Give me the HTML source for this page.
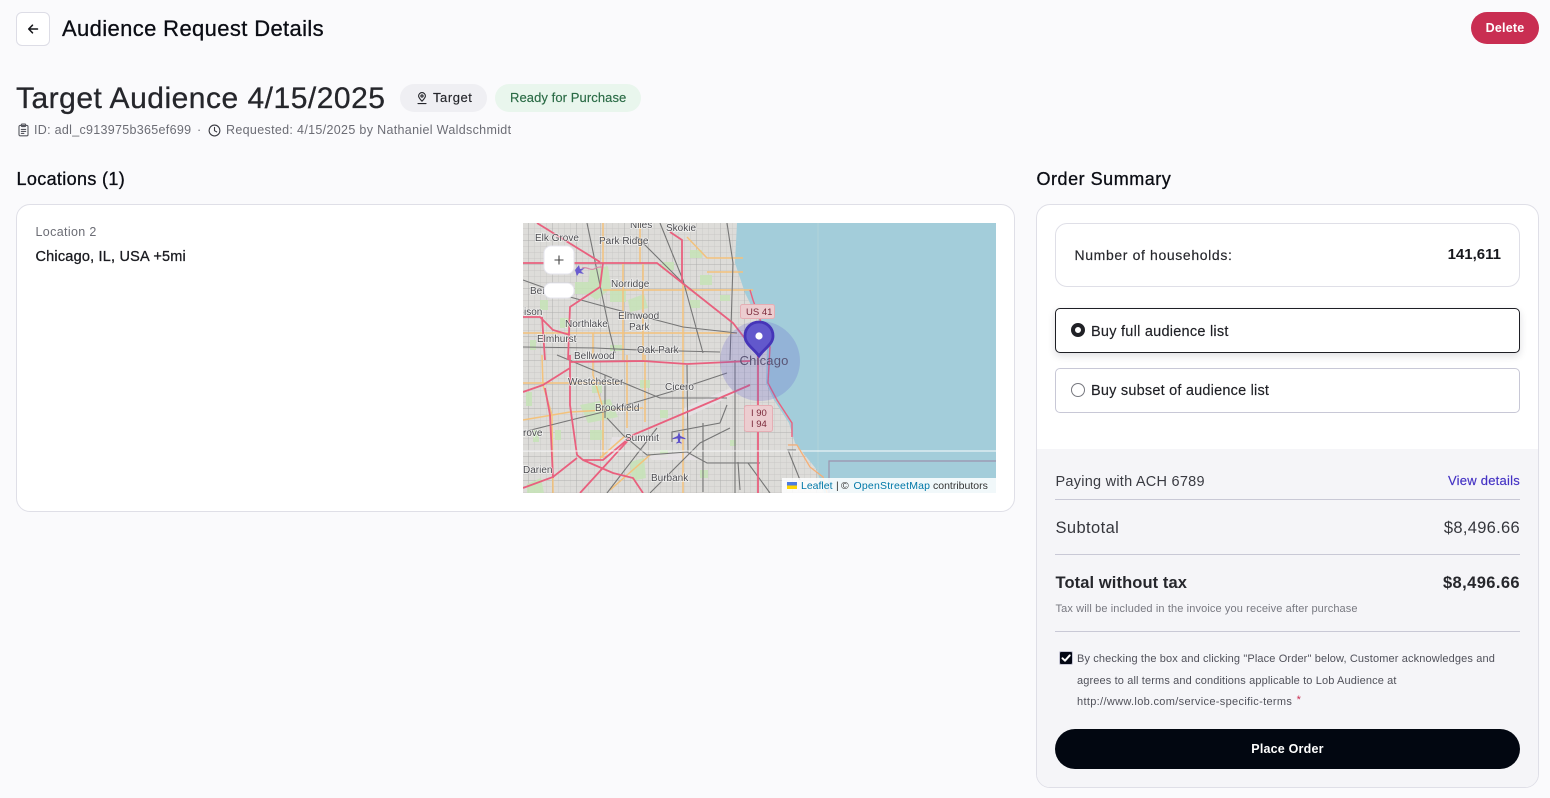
<!DOCTYPE html>
<html lang="en"><head><meta charset="utf-8"><title>Audience Request Details</title>
<style>
*{box-sizing:border-box}
html,body{margin:0;padding:0}
body{width:1550px;height:798px;overflow:hidden;background:#fafafc;position:relative;font-family:"Liberation Sans",sans-serif;color:#202126}
.t{position:absolute;white-space:nowrap;line-height:20px;height:20px}
.m{-webkit-text-stroke:.3px currentColor}
.s{-webkit-text-stroke:.15px currentColor}
.b{position:absolute}
.r{text-align:right}
.ic{position:absolute;fill:none;stroke-linecap:round;stroke-linejoin:round}
</style></head><body>

<div class="b" style="left:16px;top:12px;width:34px;height:34px;background:#fff;border:1px solid #dddde6;border-radius:6px"></div>
<svg class="ic" style="left:27px;top:23px" width="12" height="12" viewBox="0 0 12 12" stroke="#15161a" stroke-width="1.5"><path d="M10.5 6H1.8M5.5 2.2 1.7 6l3.8 3.8"/></svg>
<div class="t m" style="left:62px;top:19px;font-size:22px;letter-spacing:.37px;color:#0b0d14">Audience Request Details</div>
<div class="b" style="left:1471px;top:12px;width:68px;height:32px;background:#c92e52;border-radius:16px"></div>
<div class="t" style="left:1471px;top:18px;width:68px;text-align:center;font-size:12.5px;font-weight:700;letter-spacing:.2px;color:#fff">Delete</div>

<div class="t m" style="left:16px;top:89px;font-size:30px;letter-spacing:.5px;color:#25262b">Target Audience 4/15/2025</div>
<div class="b" style="left:400px;top:84px;width:87px;height:28px;background:#efeff3;border-radius:14px"></div>
<svg class="ic" style="left:415px;top:91px" width="14" height="14" viewBox="0 0 14 14" stroke="#25262b" stroke-width="1.1"><path d="M7 10.2C5 8 3.6 6.7 3.6 5A3.4 3.4 0 0 1 10.4 5C10.4 6.7 9 8 7 10.2Z"/><circle cx="7" cy="5" r="1.1"/><path d="M3 12.6h8"/></svg>
<div class="t s" style="left:433px;top:88px;font-size:13px;letter-spacing:.55px;color:#25262b">Target</div>
<div class="b" style="left:495px;top:84px;width:146px;height:28px;background:#e9f6ed;border-radius:14px"></div>
<div class="t s" style="left:510px;top:88px;font-size:13px;letter-spacing:.08px;color:#2a6b45">Ready for Purchase</div>

<svg class="ic" style="left:17px;top:123px" width="13" height="14" viewBox="0 0 13 14" stroke="#55565e" stroke-width="1.1"><rect x="2" y="2.4" width="9" height="10.4" rx="1.2"/><rect x="4.4" y="1" width="4.2" height="2.6" rx=".6"/><path d="M4.3 6.4h4.4M4.3 8.4h4.4M4.3 10.4h2.6"/></svg>
<div class="t" style="left:34px;top:120px;font-size:12.5px;letter-spacing:.3px;color:#6c6d75">ID: adl_c913975b365ef699</div>
<div class="t" style="left:197px;top:120px;font-size:12.5px;color:#6c6d75">·</div>
<svg class="ic" style="left:208px;top:124px" width="13" height="13" viewBox="0 0 13 13" stroke="#3a3b42" stroke-width="1.1"><circle cx="6.5" cy="6.5" r="5.4"/><path d="M6.5 3.4v3.3l2.2 1.2"/></svg>
<div class="t" style="left:226px;top:120px;font-size:12.5px;letter-spacing:.33px;color:#6c6d75">Requested: 4/15/2025 by Nathaniel Waldschmidt</div>

<div class="t m" style="left:16.5px;top:169px;font-size:18px;letter-spacing:.35px;color:#0b0d14">Locations (1)</div>
<div class="t m" style="left:1036.5px;top:169px;font-size:18px;letter-spacing:.52px;color:#0b0d14">Order Summary</div>

<div class="b" style="left:16px;top:204px;width:999px;height:308px;background:#fff;border:1px solid #dfdfe7;border-radius:14px"></div>
<div class="t" style="left:35.5px;top:222px;font-size:12.5px;letter-spacing:.35px;color:#6c6d75">Location 2</div>
<div class="t m" style="left:35.5px;top:247px;font-size:14.5px;letter-spacing:.2px;color:#1a1b20">Chicago, IL, USA +5mi</div>

<svg class="b" style="left:523px;top:223px" width="473" height="270" viewBox="523 223 473 270">
<defs>
<pattern id="g" width="6" height="6" patternUnits="userSpaceOnUse"><path d="M0 0H6M0 0V6" stroke="#c4c4c2" stroke-width=".7" fill="none"/></pattern>
<pattern id="h" width="24" height="24" patternUnits="userSpaceOnUse"><path d="M0 0H24M0 0V24" stroke="#a9a9a8" stroke-width=".8" fill="none"/></pattern>
<filter id="bl" x="0" y="0" width="100%" height="100%"><feGaussianBlur stdDeviation=".35"/></filter>
</defs>
<g filter="url(#bl)">
<rect x="523" y="223" width="473" height="270" fill="#dddcd9"/>
<rect x="523" y="223" width="320" height="270" fill="url(#g)"/>
<rect x="523" y="223" width="320" height="270" fill="url(#h)"/>
<g fill="#c5e3b6" opacity=".85">
<path d="M590 270l18-4 3 22-14 12-10-6zM610 290h16v12h-16zM628 300l16-6 4 14-18 4zM575 282h14v12h-14zM662 262h12v8h-12zM690 250h12v8h-12zM700 275h12v10h-12zM540 300h8v10h-8zM560 318h9v10h-9zM530 340h6v10h-6zM580 405l30-6 8 18-30 6zM590 430h14v10h-14zM526 392h6v14h-6zM533 430h6v12h-6zM555 430h6v10h-6zM630 462l14-4 2 20-14 3zM527 484l14-6 3 15h-17zM660 450h8v8h-8zM700 470h8v8h-8zM730 440h6v6h-6zM690 300h10v8h-10zM640 380h10v8h-10zM660 410h8v8h-8zM610 345h12v6h-12zM592 385h10v8h-10zM720 295h10v6h-10z"/>
</g>
<path d="M612 437h16l-12 20-10 4zM648 455l40-3 10 8h-46zM680 410l50-22 5 6-50 24z" fill="#e6e2e5" opacity=".85"/>
<path d="M737 223l-2 40 10 30 14 28 8 26-1 36 8 17 15 23 6 20 22 27 7 23H996V223Z" fill="#a3cdda"/>
<path d="M818 223V493" stroke="#b7d6d8" stroke-width=".7" fill="none"/>
<g fill="none" stroke="#f3c27c" stroke-width="1.5">
<path d="M623 263V360M643 263V360M683 283V493M603 290H753M687 237l20 21h36M707 272h36M523 333H737M593 333v42l10 33v50M542 355l1 30 9 30 1 78M627 355V428M645 355V422M523 420l47-8 73-4M523 383h97M603 263v-40M640 263v-40M600 458l25-22M610 490l40-35"/>
</g>
<g fill="none" stroke="#767676" stroke-width="1.1">
<path d="M587 223l23 110 5 20M660 223l23 57 20 73M727 223l6 40-3 97M637 237l46 46 50 40M523 280l47 17 40 11 73 19 54 6M523 347l72 1 45 2 80 2M557 355l103 43h67M523 432l80-20 67-20 57-19M607 418l16 17 24 20 40-3 20 11h53M672 442v-10l48-9 7-18M687 365l1 87M703 423v69M605 375v43M735 360v133M740 490l-2-28M770 493l-22-30M650 493l50-50 30-15M607 493l50-65M800 480l-12-30h8"/>
</g>
<g fill="none" stroke="#e9617e" stroke-width="1.8">
<path d="M537 223l63 39M523 263H657l76 60 17 22M603 263l-3 24-30 20-2 53M670 232l12 8v43M523 317h17l13 13 17 5M542 317l3 43M570 355v13l-27 17-20 7M570 368v37l7 50M545 388l5 27 3 63M570 362l73-1 44 3 63-3M750 385l-63 27-54 23-53 58M577 455l6 5h20l30-25M583 460l30 13 20 5 10 15M523 488l30-11 24-19M758 345V493"/>
<path d="M750 290l3 10 17 47-2 36 9 17 15 23v14" stroke-width="1.4"/>
</g>
<path d="M523 451H996" stroke="#fff" stroke-width="1.3" opacity=".75"/>
<path d="M829 493V461H996" fill="none" stroke="#9b93ad" stroke-width="1.2"/>
<path d="M788 445h9l13 22 13 10 4 16" fill="none" stroke="#f5b078" stroke-width="1.3"/>
<g font-family="'Liberation Sans',sans-serif" font-size="10" fill="#4c4c50" stroke="#fff" stroke-opacity=".65" stroke-width="1.6" paint-order="stroke">
<text x="630" y="228">Niles</text><text x="666" y="231">Skokie</text><text x="535" y="241">Elk Grove</text><text x="599" y="244">Park Ridge</text><text x="611" y="287">Norridge</text><text x="530" y="294">Ber</text><text x="618" y="319">Elmwood</text><text x="629" y="330">Park</text><text x="524" y="315">ison</text><text x="565" y="327">Northlake</text><text x="537" y="342">Elmhurst</text><text x="637" y="353">Oak Park</text><text x="574" y="359">Bellwood</text><text x="568" y="385">Westchester</text><text x="665" y="390">Cicero</text><text x="595" y="411">Brookfield</text><text x="523" y="436">rove</text><text x="625" y="441">Summit</text><text x="523" y="473">Darien</text><text x="651" y="481">Burbank</text>
</g>
<path d="M679 432l1.4 4 5 2.2v1l-5-.8-.5 3 1.8 1.4v.8l-2.7-.8-2.7.8v-.8l1.8-1.4-.5-3-5 .8v-1l5-2.2z" fill="#5b4fc9"/>
<path d="M575 270l4-5 1 4 5-1-4 3 3 3-5-1-2 3z" fill="#6a5bd0"/>
<path d="M582 268c5-2 8 3 12 1s4-2 8-2" fill="none" stroke="#d88aa8" stroke-width="1.2"/>
<circle cx="760" cy="361" r="40" fill="#5b55cf" opacity=".22"/>
<g font-family="'Liberation Sans',sans-serif" fill="#7c2a3a" font-size="9.5">
<rect x="740.500" y="304.500" width="34" height="14" rx="2" fill="#eccdd0" stroke="#e5aeb4"/>
<text x="746" y="315">US 41</text>
<rect x="744.500" y="405.500" width="28" height="26" rx="2" fill="#eccdd0" stroke="#e5aeb4"/>
<text x="751" y="416">I 90</text><text x="751" y="427">I 94</text>
</g>
<text x="739.500" y="365" font-family="'Liberation Sans',sans-serif" font-size="13" letter-spacing=".2" fill="#5a5575">Chicago</text>
<path d="M759 322c-8 0-14 6-14 14 0 8 8 12 14 20 6-8 14-12 14-20 0-8-6-14-14-14Z" fill="#6259cc" stroke="#4534b8" stroke-width="2.800"/>
<circle cx="759" cy="336" r="3.600" fill="#fff"/>
</g>
<rect x="544" y="246" width="30" height="28" rx="7" fill="#fff" stroke="#e6e6ee"/>
<path d="M559 255.500v9M554.500 260h9" stroke="#444" stroke-width="1.100"/>
<rect x="544" y="283" width="30" height="15" rx="7" fill="#fff" stroke="#e6e6ee"/>
<rect x="782" y="478" width="214" height="15" fill="#fff" opacity=".85"/>
<rect x="787" y="482" width="10" height="3.500" fill="#4c7be0"/><rect x="787" y="485.500" width="10" height="3.500" fill="#ffd500"/>
<text font-family="'Liberation Sans',sans-serif" font-size="10.500" y="489" fill="#333"><tspan x="801" fill="#0078a8">Leaflet</tspan><tspan x="836">|</tspan><tspan x="841">©</tspan><tspan x="853.500" fill="#0078a8" letter-spacing=".2">OpenStreetMap</tspan><tspan x="933">contributors</tspan></text>
</svg>

<div class="b" style="left:1036px;top:204px;width:503px;height:584px;background:#fff;border:1px solid #dfdfe7;border-radius:14px;overflow:hidden"><div class="b" style="left:0;top:244px;width:501px;height:338px;background:#f5f5f8"></div></div>
<div class="b" style="left:1055px;top:223px;width:465px;height:64px;background:#fff;border:1px solid #dfdfe7;border-radius:12px"></div>
<div class="t s" style="left:1074.500px;top:245px;font-size:14px;letter-spacing:.63px;color:#25262b">Number of households:</div>
<div class="t r" style="right:49px;top:245px;font-size:15px;font-weight:700;color:#17181d">141,611</div>

<div class="b" style="left:1055px;top:308px;width:465px;height:45px;background:#fff;border:1px solid #1d1e24;border-radius:5px;box-shadow:0 3px 8px rgba(20,20,40,.14)"></div>
<div class="b" style="left:1071px;top:323px;width:14px;height:14px;border-radius:50%;border:4px solid #202126;background:#fff"></div>
<div class="t s" style="left:1091px;top:322px;font-size:14.500px;letter-spacing:.25px;color:#202126">Buy full audience list</div>
<div class="b" style="left:1055px;top:368px;width:465px;height:45px;background:#fff;border:1px solid #c8c8d6;border-radius:5px"></div>
<div class="b" style="left:1071px;top:383px;width:14px;height:14px;border-radius:50%;border:1px solid #77787f;background:#fff"></div>
<div class="t s" style="left:1091px;top:381px;font-size:14.500px;letter-spacing:.21px;color:#202126">Buy subset of audience list</div>

<div class="t" style="left:1055.500px;top:472px;font-size:14.500px;letter-spacing:.25px;color:#3a3b42">Paying with ACH 6789</div>
<div class="t r s" style="right:30px;top:471px;font-size:13px;letter-spacing:.24px;color:#4432c4">View details</div>
<div class="b" style="left:1055px;top:499px;width:465px;height:1px;background:#c9c9d6"></div>
<div class="t" style="left:1055.500px;top:518px;font-size:16.500px;letter-spacing:.4px;color:#35363c">Subtotal</div>
<div class="t r" style="right:30px;top:518px;font-size:16.500px;letter-spacing:.3px;color:#35363c">$8,496.66</div>
<div class="b" style="left:1055px;top:554px;width:465px;height:1px;background:#c9c9d6"></div>
<div class="t" style="left:1055.500px;top:573px;font-size:16.500px;font-weight:700;letter-spacing:.1px;color:#26272c">Total without tax</div>
<div class="t r" style="right:30px;top:573px;font-size:16.500px;font-weight:700;letter-spacing:.4px;color:#26272c">$8,496.66</div>
<div class="t" style="left:1055.500px;top:599px;font-size:11px;letter-spacing:.12px;color:#787981">Tax will be included in the invoice you receive after purchase</div>
<div class="b" style="left:1055px;top:631px;width:465px;height:1px;background:#c9c9d6"></div>

<div class="b" style="left:1059px;top:651px;width:14px;height:14px;background:#030714;border:1px solid #c5c5d4;border-radius:2px"></div>
<svg class="ic" style="left:1060px;top:652px" width="12" height="12" viewBox="0 0 12 12" stroke="#fff" stroke-width="2"><path d="M2.500 6.300 5 8.700 9.700 3.400"/></svg>
<div class="t" style="left:1077px;top:649px;font-size:11px;letter-spacing:.13px;color:#50515a">By checking the box and clicking "Place Order" below, Customer acknowledges and</div>
<div class="t" style="left:1077px;top:671px;font-size:11px;letter-spacing:.13px;color:#50515a">agrees to all terms and conditions applicable to Lob Audience at</div>
<div class="t" style="left:1077px;top:692px;font-size:11px;letter-spacing:.33px;color:#50515a">http://www.lob.com/service-specific-terms <span style="color:#c92e52;position:relative;top:-2px;margin-left:1px">*</span></div>
<div class="b" style="left:1055px;top:729px;width:465px;height:40px;background:#020711;border-radius:20px"></div>
<div class="t" style="left:1055px;top:739px;width:465px;text-align:center;font-size:12.500px;font-weight:700;letter-spacing:.2px;color:#fff">Place Order</div>
</body></html>
